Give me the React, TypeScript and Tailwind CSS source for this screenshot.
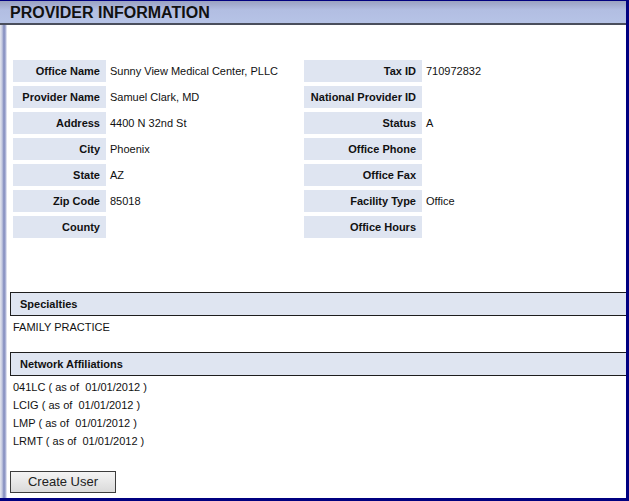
import React from "react"

const left = [
  ["Office Name", "Sunny View Medical Center, PLLC"],
  ["Provider Name", "Samuel Clark, MD"],
  ["Address", "4400 N 32nd St"],
  ["City", "Phoenix"],
  ["State", "AZ"],
  ["Zip Code", "85018"],
  ["County", ""],
]

const right = [
  ["Tax ID", "710972832"],
  ["National Provider ID", ""],
  ["Status", "A"],
  ["Office Phone", ""],
  ["Office Fax", ""],
  ["Facility Type", "Office"],
  ["Office Hours", ""],
]

const affiliations = ["041LC", "LCIG", "LMP", "LRMT"]

function SectionHeader({ title }: { title: string }) {
  return (
    <div className="ml-[10px] h-[24px] flex items-center border border-r-0 border-[#1e1e1e] bg-[#dfe5f1] pl-[9px] pt-[1px] text-[11px] font-bold text-[#111]">
      {title}
    </div>
  )
}

export default function App() {
  return (
    <div
      className="w-[629px] h-[501px] overflow-hidden border-t border-r-[3px] border-b-[3px] border-[#000080] bg-white text-black flex flex-col"
      style={{ fontFamily: '"Liberation Sans", Arial, sans-serif' }}
    >
      <div className="h-[24px] shrink-0 border-b-2 border-[#4a4e5c] bg-[linear-gradient(to_bottom,#9ba2c0_0px,#a4add0_4px,#b2bee2_9px,#b6c3e6_22px)] pl-[10px] flex items-center">
        <h1 className="text-[16px] font-bold leading-none text-[#111] mt-[1px]">PROVIDER INFORMATION</h1>
      </div>

      <div className="flex-1 bg-[linear-gradient(to_right,#e4e6ee_0px,#c4c9e0_2px,#7e88bc_4px,#b8bede_6px,#ffffff_7px)] bg-no-repeat bg-[length:8px_100%]">
        <div className="pt-[35px] pl-[13px] grid grid-cols-[93px_190px_118px_1fr] gap-x-[4px] gap-y-[4px] text-[11px]">
          {left.map((row, i) => (
            <React.Fragment key={row[0]}>
              <div className="h-[22px] bg-[#dfe5f1] flex items-center justify-end pr-[6px] font-bold text-[#111]">
                {row[0]}
              </div>
              <div className="h-[22px] flex items-center text-[#111]">{row[1]}</div>
              <div className="h-[22px] bg-[#dfe5f1] flex items-center justify-end pr-[6px] font-bold text-[#111]">
                {right[i][0]}
              </div>
              <div className="h-[22px] flex items-center text-[#111]">{right[i][1]}</div>
            </React.Fragment>
          ))}
        </div>

        <div className="mt-[54px]">
          <SectionHeader title="Specialties" />
          <div className="mt-[3px] pl-[13px] h-[16px] leading-[16px] text-[11px] text-[#111]">FAMILY PRACTICE</div>
        </div>

        <div className="mt-[17px]">
          <SectionHeader title="Network Affiliations" />
          <div className="mt-[2px] pl-[13px] text-[11px] text-[#111]">
            {affiliations.map((a) => (
              <div key={a} className="h-[18px] leading-[18px] whitespace-pre">
                {a} ( as of  01/01/2012 )
              </div>
            ))}
          </div>
        </div>

        <div className="mt-[19px] pl-[10px]">
          <button className="w-[106px] h-[22px] border border-[#3c3c3c] bg-[linear-gradient(to_bottom,#f4f4f4,#dadada)] text-[13px] text-[#222] leading-none">
            Create User
          </button>
        </div>
      </div>
    </div>
  )
}
